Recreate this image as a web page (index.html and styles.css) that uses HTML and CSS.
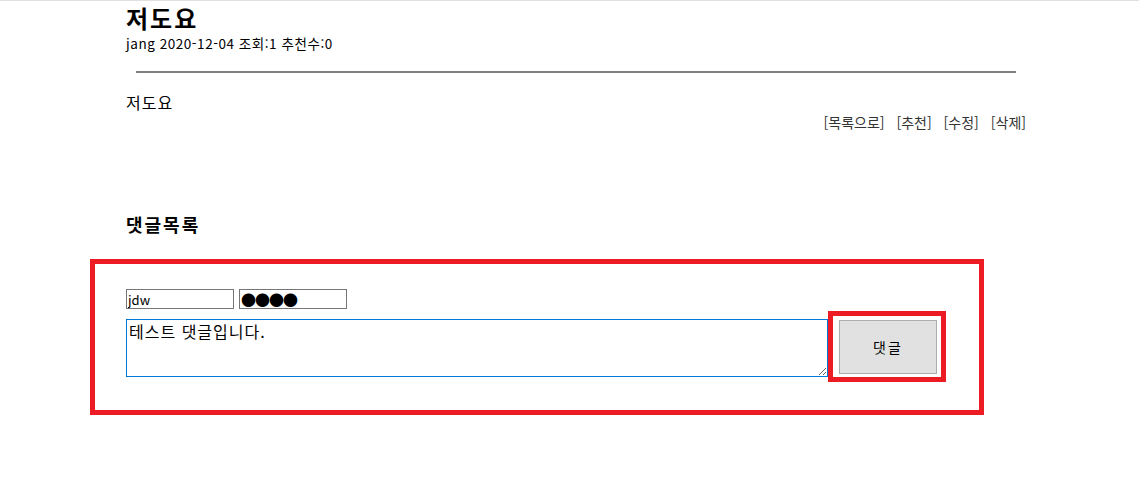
FILE: index.html
```html
<!DOCTYPE html>
<html lang="ko">
<head>
<meta charset="utf-8">
<title>저도요</title>
<link rel="stylesheet" href="styles.css">
</head>
<body>
<div class="topline"></div>
<div class="page">
  <h1 class="title">저도요</h1>
  <div class="meta">jang 2020-12-04 조회:1 추천수:0</div>
  <hr class="divider">
  <div class="content">저도요</div>
  <div class="actions">
    <a href="#">[목록으로]</a>
    <a href="#">[추천]</a>
    <a href="#">[수정]</a>
    <a href="#">[삭제]</a>
  </div>
  <h2 class="comments-title">댓글목록</h2>
</div>
<div class="comment-box">
  <div class="fields">
    <input class="field" type="text" value="jdw">
    <input class="field pw" type="text" value="●●●●">
  </div>
  <div class="write-row">
    <textarea class="comment-text">테스트 댓글입니다.</textarea>
    <span class="btn-wrap"><button class="submit">댓글</button></span>
  </div>
</div>
</body>
</html>
```
FILE: styles.css
```css
html, body {
  margin: 0;
  padding: 0;
  background: #fff;
}
body {
  font-family: "Noto Sans CJK KR", "Noto Sans", sans-serif;
  color: #000;
}
.topline {
  height: 1px;
  background: #e0e0e0;
}
.page {
  margin-left: 126px;
  width: 900px;
}
.title {
  margin: 1px 0 0;
  font-size: 24px;
  line-height: 32px;
  font-weight: 700;
  letter-spacing: 2px;
}
.meta {
  font-size: 13.5px;
  line-height: 18px;
  margin-top: 0;
  letter-spacing: 0.55px;
}
.divider {
  margin: 19px 10px 0;
  border: 0;
  height: 2px;
  background: #808080;
}
.content {
  font-size: 16px;
  line-height: 22px;
  margin-top: 18px;
  letter-spacing: 1px;
}
.actions {
  text-align: right;
  font-size: 14px;
  line-height: 20px;
  margin-top: -1px;
}
.actions a {
  color: #333;
  text-decoration: none;
  margin-left: 8px;
}
.comments-title {
  margin: 80px 0 0;
  font-size: 18px;
  line-height: 24px;
  font-weight: 700;
  letter-spacing: 2px;
}
.comment-box {
  box-sizing: border-box;
  margin: 23px 0 0 90px;
  width: 894px;
  height: 156px;
  border: 5px solid #ed1c24;
  padding: 25px 0 0 31px;
}
.fields {
  display: flex;
  gap: 5px;
  height: 20px;
}
.field {
  box-sizing: border-box;
  width: 108px;
  height: 20px;
  border: 1px solid #767676;
  padding: 0 1px;
  margin: 0;
  font-family: "Noto Sans CJK KR", "Noto Sans", sans-serif;
  font-size: 13px;
  line-height: 18px;
  color: #000;
  outline: none;
}
.field.pw {
  font-size: 15px;
  letter-spacing: -1px;
}
.write-row {
  display: flex;
  align-items: flex-start;
  margin-top: 2px;
}
.comment-text {
  box-sizing: border-box;
  width: 702px;
  height: 58px;
  margin: 8px 0 0;
  border: 1px solid #0078d7;
  padding: 1px 2px;
  font-family: "Noto Sans CJK KR", "Noto Sans", sans-serif;
  font-size: 16px;
  line-height: 20px;
  letter-spacing: 1px;
  color: #000;
  outline: none;
}
.btn-wrap {
  display: block;
  border: 5px solid #ed1c24;
  padding: 4px 4px 3px 6px;
}
.submit {
  display: block;
  box-sizing: border-box;
  width: 98px;
  height: 54px;
  margin: 0;
  background: #e1e1e1;
  border: 1px solid #adadad;
  font-family: "Noto Sans CJK KR", "Noto Sans", sans-serif;
  font-size: 14px;
  letter-spacing: 2px;
  color: #000;
  padding: 0;
}
```
